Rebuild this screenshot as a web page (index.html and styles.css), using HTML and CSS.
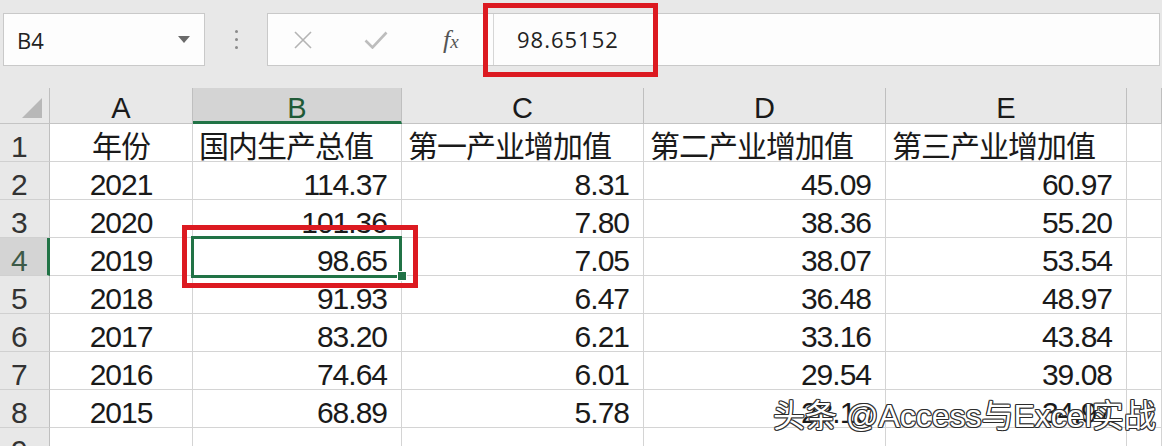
FILE: index.html
```html
<!DOCTYPE html>
<html lang="zh">
<head>
    <meta charset="utf-8">
    <title>Excel</title>
    <link rel="stylesheet" href="styles.css">
</head>
<body>
    <div class="toolbar">
        <div class="name-box">
            <span>B4</span>
            <span class="caret"></span>
        </div>
        <div class="dots"><span></span><span></span><span></span></div>
        <div class="formula-bar">
            <div class="fb-icons">
                <svg width="18" height="18" viewBox="0 0 18 18"><path d="M1 1L17 17M17 1L1 17" stroke="#b4b4b4" stroke-width="1.6" fill="none"/></svg>
                <svg width="24" height="18" viewBox="0 0 24 18"><path d="M1.5 9.5L8.5 16.5L22.5 1.5" stroke="#bdbdbd" stroke-width="2.6" fill="none"/></svg>
                <span class="fx"><i>f</i><i class="x">x</i></span>
            </div>
            <div class="fb-input">98.65152</div>
        </div>
    </div>

    <div class="sheet">
        <div class="corner"><svg width="20" height="20" viewBox="0 0 20 20"><polygon points="20,0 20,20 0,20" fill="#b8b8b8"/></svg></div>
        <div class="col-head">A</div>
        <div class="col-head sel">B</div>
        <div class="col-head">C</div>
        <div class="col-head">D</div>
        <div class="col-head">E</div>
        <div class="col-head"></div>

        <div class="row-head">1</div>
        <div class="cell year">年份</div>
        <div class="cell">国内生产总值</div>
        <div class="cell">第一产业增加值</div>
        <div class="cell">第二产业增加值</div>
        <div class="cell">第三产业增加值</div>
        <div class="cell"></div>

        <div class="row-head">2</div>
        <div class="cell year">2021</div>
        <div class="cell num">114.37</div>
        <div class="cell num">8.31</div>
        <div class="cell num">45.09</div>
        <div class="cell num">60.97</div>
        <div class="cell"></div>

        <div class="row-head">3</div>
        <div class="cell year">2020</div>
        <div class="cell num">101.36</div>
        <div class="cell num">7.80</div>
        <div class="cell num">38.36</div>
        <div class="cell num">55.20</div>
        <div class="cell"></div>

        <div class="row-head sel">4</div>
        <div class="cell year">2019</div>
        <div class="cell num active">98.65</div>
        <div class="cell num">7.05</div>
        <div class="cell num">38.07</div>
        <div class="cell num">53.54</div>
        <div class="cell"></div>

        <div class="row-head">5</div>
        <div class="cell year">2018</div>
        <div class="cell num">91.93</div>
        <div class="cell num">6.47</div>
        <div class="cell num">36.48</div>
        <div class="cell num">48.97</div>
        <div class="cell"></div>

        <div class="row-head">6</div>
        <div class="cell year">2017</div>
        <div class="cell num">83.20</div>
        <div class="cell num">6.21</div>
        <div class="cell num">33.16</div>
        <div class="cell num">43.84</div>
        <div class="cell"></div>

        <div class="row-head">7</div>
        <div class="cell year">2016</div>
        <div class="cell num">74.64</div>
        <div class="cell num">6.01</div>
        <div class="cell num">29.54</div>
        <div class="cell num">39.08</div>
        <div class="cell"></div>

        <div class="row-head">8</div>
        <div class="cell year">2015</div>
        <div class="cell num">68.89</div>
        <div class="cell num">5.78</div>
        <div class="cell num">28.13</div>
        <div class="cell num">34.97</div>
        <div class="cell"></div>

        <div class="row-head">9</div>
        <div class="cell"></div>
        <div class="cell"></div>
        <div class="cell"></div>
        <div class="cell"></div>
        <div class="cell"></div>
        <div class="cell"></div>
    </div>

    <!-- red annotation boxes -->
    <div class="mark mark-formula"></div>
    <div class="mark mark-cell"></div>

    <div class="watermark">头条 @Access与Excel实战</div>
</body>
</html>
```

FILE: styles.css
```css
body {
    margin: 0;
    width: 1162px;
    height: 446px;
    overflow: hidden;
    position: relative;
    background: #e8e8e8;
    font-family: "Liberation Sans", "Noto Sans CJK SC", sans-serif;
}

.toolbar {
    display: flex;
    align-items: flex-start;
    height: 88px;
    box-sizing: border-box;
    padding: 13px 2px 0 3px;
}

.name-box {
    width: 202px;
    height: 53px;
    box-sizing: border-box;
    display: flex;
    align-items: center;
    justify-content: space-between;
    padding: 0 14px 0 13px;
    background: #fdfdfd;
    border: 1px solid #c9c9c9;
    font: 22px "Open Sans", sans-serif;
    color: #222;
}

.caret {
    width: 0;
    height: 0;
    border-left: 6px solid transparent;
    border-right: 6px solid transparent;
    border-top: 7px solid #6a6a6a;
}

.dots {
    width: 62px;
    height: 53px;
    display: flex;
    flex-direction: column;
    align-items: center;
    justify-content: center;
    gap: 5px;
}

.dots span {
    width: 3px;
    height: 3px;
    border-radius: 50%;
    background: #8a8a8a;
}

.formula-bar {
    flex: 1;
    height: 53px;
    box-sizing: border-box;
    display: flex;
    background: #fdfdfd;
    border: 1px solid #c9c9c9;
}

.fb-icons {
    width: 225px;
    box-sizing: border-box;
    display: flex;
    align-items: center;
    gap: 52px;
    padding-left: 26px;
}

.fx {
    font-family: "Liberation Serif", serif;
    color: #555;
    font-size: 26px;
    margin-left: 3px;
}

.fx .x {
    font-size: 19px;
    margin-left: 0;
}

.fb-input {
    flex: 1;
    border-left: 1px solid #d6d6d6;
    padding-left: 23px;
    font: 22px/51px "Open Sans", sans-serif;
    letter-spacing: 1px;
    color: #222;
}

.sheet {
    display: grid;
    grid-template-columns: 50px 143px 209px 242px 242px 241px 1fr;
    grid-template-rows: 36px repeat(9, 38px);
}

.corner {
    background: #e8e8e8;
    border-right: 1px solid #bfbfbf;
    border-bottom: 1px solid #c4c4c4;
    padding: 10px 0 0 22px;
    box-sizing: border-box;
}

.corner svg {
    display: block;
}

.col-head {
    background: #e8e8e8;
    border-right: 1px solid #bfbfbf;
    border-bottom: 1px solid #c4c4c4;
    box-sizing: border-box;
    text-align: center;
    font-size: 29px;
    line-height: 31px;
    padding-top: 5px;
    color: #1a1a1a;
}

.col-head.sel {
    background: #d4d4d4;
    border-bottom: 3px solid #217346;
    color: #1f5a37;
}

.row-head {
    background: #e8e8e8;
    border-right: 1px solid #bfbfbf;
    border-bottom: 1px solid #d0d0d0;
    box-sizing: border-box;
    padding: 8px 0 0 11px;
    font-size: 30px;
    line-height: 30px;
    color: #333;
}

.row-head.sel {
    background: #d4d4d4;
    border-right: 3px solid #217346;
    color: #3d5a48;
}

.cell {
    background: #fff;
    border-right: 1px solid #d4d4d4;
    border-bottom: 1px solid #d4d4d4;
    box-sizing: border-box;
    padding: 8px 14px 0 6px;
    font-size: 30px;
    line-height: 30px;
    letter-spacing: -1px;
    color: #1a1a1a;
    white-space: nowrap;
    overflow: hidden;
}

.num {
    text-align: right;
}

.year {
    text-align: center;
    padding-left: 0;
    padding-right: 0;
}

.cell.active {
    position: relative;
    overflow: visible;
}

.cell.active::before {
    content: "";
    position: absolute;
    top: -2px;
    left: -2px;
    right: -1px;
    bottom: -3px;
    border: 3px solid #217346;
}

.cell.active::after {
    content: "";
    position: absolute;
    right: -6px;
    bottom: -6px;
    width: 8px;
    height: 8px;
    background: #217346;
    border: 1px solid #fff;
}

.mark {
    position: absolute;
    box-sizing: border-box;
    border: 5px solid #dc1a21;
}

.mark-formula {
    left: 483px;
    top: 3px;
    width: 175px;
    height: 74px;
}

.mark-cell {
    left: 182px;
    top: 225px;
    width: 236px;
    height: 63px;
}

.watermark {
    position: absolute;
    left: 773px;
    top: 400px;
    font-size: 32px;
    line-height: 32px;
    white-space: nowrap;
    color: #fff;
    text-shadow: 1px 0 #2a2a2a, -1px 0 #2a2a2a, 0 1px #2a2a2a, 0 -1px #2a2a2a,
        1px 1px #555, -1px -1px #555, 1px -1px #555, -1px 1px #555;
}
```
